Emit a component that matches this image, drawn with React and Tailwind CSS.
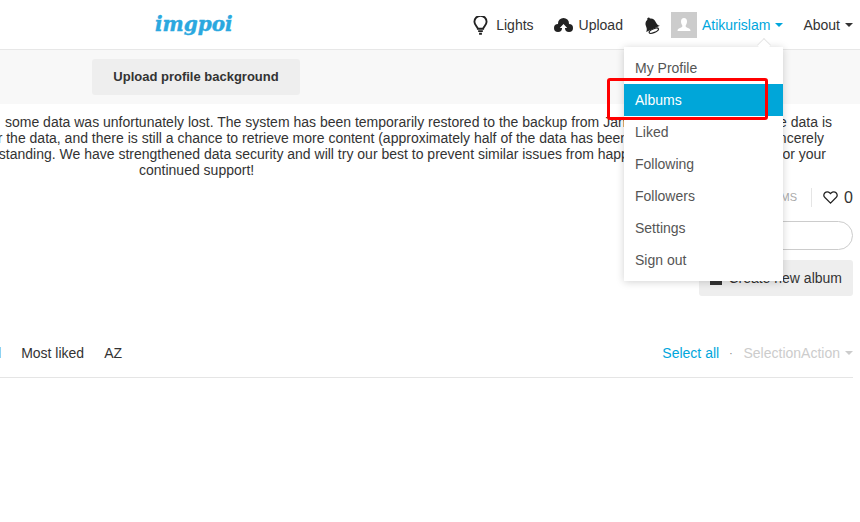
import React from "react";

const Caret = ({ className }) => (
  <span className={`inline-block w-0 h-0 border-x-[4px] border-x-transparent border-t-[4px] ${className}`} />
);

const items = ["My Profile", "Albums", "Liked", "Following", "Followers", "Settings", "Sign out"];

export default function App() {
  return (
    <div className="relative w-[860px] h-[522px] overflow-hidden bg-white text-[14px] text-[#333] font-['Liberation_Sans',Arial,sans-serif]">
      <header className="h-[50px] border-b border-[#e7e7e7] flex items-center pl-[155px] pr-[7px] pt-[1px]">
        <span className="w-[80px] -mt-[2px] text-[#2aa8df] text-[20px] leading-[24px] font-bold italic font-['DejaVu_Serif',serif] whitespace-nowrap [-webkit-text-stroke:0.4px_#2aa8df]">
          imgpoi
        </span>
        <nav className="ml-auto flex items-center">
          <svg width="15" height="19" viewBox="0 0 16 20" fill="none" stroke="#222" strokeWidth="2" className="mr-[8px]">
            <path d="M5.2 13.5c0-2.2-3.7-3.6-3.7-7.4a6.5 6.5 0 0 1 13 0c0 3.8-3.7 5.2-3.7 7.4z" />
            <path d="M5.5 16h5M6.5 18.800h3" />
          </svg>
          <span>Lights</span>
          <svg width="19" height="15" viewBox="0 0 19 15" className="ml-[20px] mr-[6px]">
            <circle cx="9.500" cy="5.500" r="5.500" fill="#222" />
            <circle cx="4" cy="10" r="4" fill="#222" />
            <circle cx="15" cy="10" r="4" fill="#222" />
            <path d="M9.500 6 5.800 10h2.200v5h3v-5h2.200z" fill="#fff" />
          </svg>
          <span>Upload</span>
          <svg width="17" height="19" viewBox="0 0 17 19" className="ml-[20px] mr-[11px]" fill="#222">
            <g transform="rotate(-24 8.500 9.500)">
              <path d="M8.500 1a1.400 1.400 0 0 1 1.400 1.500c2.800.7 3.900 3 3.900 5.700 0 2.800 1.200 4.100 2.200 5H1c1-.9 2.200-2.200 2.200-5 0-2.700 1.100-5 3.900-5.700A1.400 1.400 0 0 1 8.500 1z" />
              <ellipse cx="8.500" cy="15.200" rx="5" ry="1.800" fill="#fff" stroke="#222" strokeWidth="1.200" />
            </g>
          </svg>
          <span className="w-[26px] h-[26px] bg-[#cccccc] flex items-center justify-center mr-[5px]">
            <svg width="16" height="16" viewBox="0 0 16 16" fill="#fff">
              <path d="M8 1c2 0 3 1.500 3 3.500S10 8 9.600 8.700c0 1 .6 1.500 2.400 2.200 1.500.6 2.500 1.100 2.500 3.100h-13c0-2 1-2.500 2.500-3.100 1.800-.7 2.400-1.200 2.400-2.200C6 8 5 6.500 5 4.500S6 1 8 1z" />
            </svg>
          </span>
          <span className="text-[#00a6dc]">Atikurislam</span>
          <Caret className="ml-[5px] border-t-[#00a6dc]" />
          <span className="ml-[20px]">About</span>
          <Caret className="ml-[5px] border-t-[#333]" />
        </nav>
      </header>

      <section className="h-[54px] bg-[#f8f8f8] flex items-center pl-[92px]">
        <button className="w-[208px] h-[36px] rounded-[3px] bg-[#eeeeee] font-bold text-[13px] text-[#333]">
          Upload profile background
        </button>
      </section>

      <div className="pt-[10px] h-[74px] leading-[16px] whitespace-nowrap">
        <p className="ml-[5px] w-[827px] flex justify-between">
          <span>some data was unfortunately lost. The system has been temporarily restored to the backup from January, and som</span>
          <span>e data is</span>
        </p>
        <p className="-ml-[14px] w-[838px] flex justify-between">
          <span>for the data, and there is still a chance to retrieve more content (approximately half of the data has been restored). We si</span>
          <span>ncerely</span>
        </p>
        <p className="-ml-[37px] w-[863px] flex justify-between">
          <span>understanding. We have strengthened data security and will try our best to prevent similar issues from happening again. Thank</span>
          <span>or your</span>
        </p>
        <p className="ml-[139px]">continued support!</p>
      </div>

      <div className="flex flex-col items-end pr-[7px] pt-[10px]">
        <div className="flex items-center h-[19px]">
          <span className="text-[11px] text-[#aaaaaa]">ITEMS</span>
          <span className="w-px h-[19px] bg-[#e5e5e5] ml-[14px] mr-[11px]" />
          <svg width="15" height="13" viewBox="0 0 24 21" fill="none" stroke="#222" strokeWidth="2" className="mr-[6px]">
            <path d="M12 19.500 3 10.500a5.500 5.500 0 0 1 0-7.600 5.300 5.300 0 0 1 7.600 0L12 4.300l1.400-1.400a5.300 5.300 0 0 1 7.600 0 5.500 5.500 0 0 1 0 7.600z" />
          </svg>
          <span className="text-[16px] leading-[19px]">0</span>
        </div>
        <div className="mt-[14px] w-[200px] h-[29px] rounded-full border border-[#cccccc]" />
        <button className="mt-[10px] w-[154px] h-[36px] pt-[1px] rounded-[3px] bg-[#eeeeee] flex items-center justify-end gap-[6px] pr-[11px]">
          <span className="w-[12px] h-[12px] bg-[#333]" />
          <span>Create new album</span>
        </button>
      </div>

      <div className="mt-[47px] -ml-[2px] mr-[7px] h-[35px] pb-[14px] border-b border-[#e5e5e5] flex items-center">
        <span>l</span>
        <span className="ml-[20px]">Most liked</span>
        <span className="ml-[20px]">AZ</span>
        <span className="ml-auto text-[#00a6dc]">Select all</span>
        <span className="ml-[10px] mr-[11px] text-[#777] text-[10px]">·</span>
        <span className="text-[#cccccc]">SelectionAction</span>
        <Caret className="ml-[5px] border-t-[#cccccc]" />
      </div>

      <div className="absolute left-[624px] top-[47px] w-[159px] h-[234px] bg-white shadow-[0_1px_8px_rgba(0,0,0,0.18)] pt-[5px]">
        <span className="absolute left-[135px] -top-[7px] w-[10px] h-[10px] rotate-45 bg-white border-l border-t border-[#e5e5e5]" />
        {items.map((t) => (
          <div
            key={t}
            className={`relative h-[32px] pl-[11px] flex items-center ${t === "Albums" ? "bg-[#00a6d9] text-white" : "text-[#555]"}`}
          >
            {t}
          </div>
        ))}
      </div>

      <div className="absolute left-[607px] top-[78px] w-[161px] h-[42px] border-[3px] border-[#ff0000] rounded-[3px]" />
    </div>
  );
}
